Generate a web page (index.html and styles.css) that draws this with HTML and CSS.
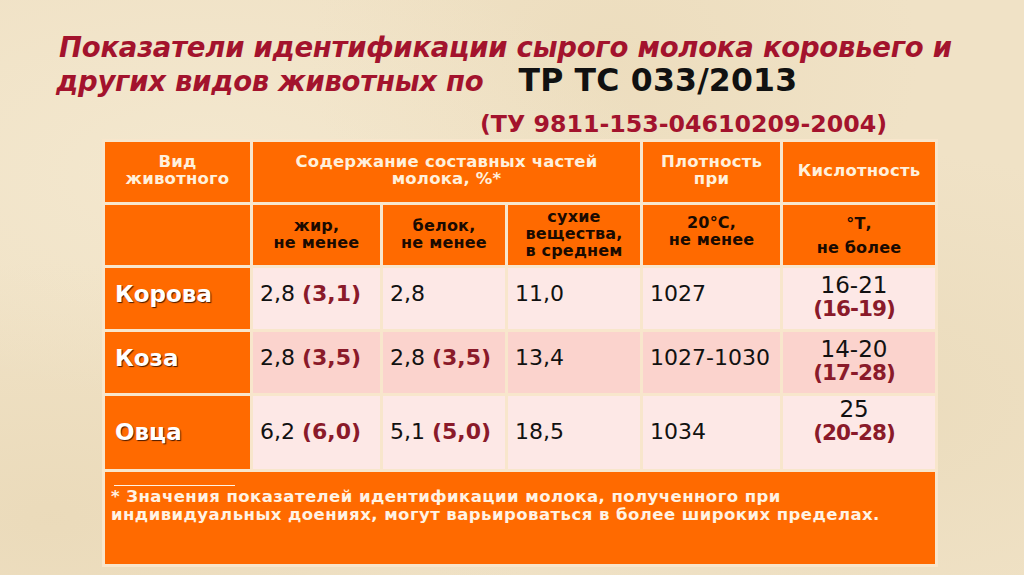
FILE: index.html
```html
<!DOCTYPE html>
<html lang="ru">
<head>
<meta charset="utf-8">
<link rel="stylesheet" href="styles.css">
</head>
<body>
<div class="slide">
  <h1 class="title">
    <span class="l1">Показатели идентификации сырого молока коровьего и</span>
    <span class="l2"><span class="it">других видов животных по</span><span class="tr">ТР ТС 033/2013</span></span>
    <span class="l3">(ТУ 9811-153-04610209-2004)</span>
  </h1>
  <table class="tbl">
    <colgroup>
      <col class="w1"><col class="w2"><col class="w3"><col class="w4"><col class="w5"><col class="w6">
    </colgroup>
    <tr class="h1">
      <th>Вид<br>животного</th>
      <th colspan="3">Содержание составных частей<br>молока, %*</th>
      <th>Плотность<br>при</th>
      <th class="mid">Кислотность</th>
    </tr>
    <tr class="h2">
      <th></th>
      <th class="two">жир,<br>не менее</th>
      <th class="two">белок,<br>не менее</th>
      <th class="three">сухие<br>вещества,<br>в среднем</th>
      <th class="up">20°С,<br>не менее</th>
      <th class="lowT">°Т,<br>не более</th>
    </tr>
    <tr class="r light">
      <th class="name">Корова</th>
      <td>2,8 <b>(3,1)</b></td>
      <td>2,8</td>
      <td>11,0</td>
      <td>1027</td>
      <td class="ac">16-21<br><b>(16-19)</b></td>
    </tr>
    <tr class="r dark">
      <th class="name">Коза</th>
      <td>2,8 <b>(3,5)</b></td>
      <td>2,8 <b>(3,5)</b></td>
      <td>13,4</td>
      <td>1027-1030</td>
      <td class="ac">14-20<br><b>(17-28)</b></td>
    </tr>
    <tr class="r light tall">
      <th class="name">Овца</th>
      <td>6,2 <b>(6,0)</b></td>
      <td>5,1 <b>(5,0)</b></td>
      <td>18,5</td>
      <td>1034</td>
      <td class="ac">25<br><b>(20-28)</b></td>
    </tr>
    <tr class="foot">
      <td colspan="6"><div class="rule"></div>* Значения показателей идентификации молока, полученного при<br>индивидуальных доениях, могут варьироваться в более широких пределах.</td>
    </tr>
  </table>
</div>
</body>
</html>
```
FILE: styles.css
```css
html, body {
  margin: 0;
  padding: 0;
}
body {
  width: 1024px;
  height: 575px;
  overflow: hidden;
  background-color: #f0e2c6;
  background-image:
    radial-gradient(ellipse at 20% 30%, rgba(250,242,222,0.35), rgba(250,242,222,0) 40%),
    radial-gradient(ellipse at 80% 70%, rgba(222,204,165,0.3), rgba(222,204,165,0) 45%),
    radial-gradient(ellipse at 60% 10%, rgba(230,212,175,0.35), rgba(230,212,175,0) 35%),
    radial-gradient(ellipse at 5% 90%, rgba(225,205,165,0.35), rgba(225,205,165,0) 35%);
  font-family: "DejaVu Sans", Verdana, sans-serif;
}
.slide {
  padding-top: 31px;
  box-sizing: border-box;
  height: 575px;
}
.title {
  margin: 0;
  font-weight: bold;
  font-size: 27.5px;
  line-height: 33px;
  display: flex;
  flex-direction: column;
}
.l1, .it {
  color: #a3132d;
  font-style: italic;
  letter-spacing: -0.25px;
}
.l1 {
  padding-left: 59px;
}
.l2 {
  padding-left: 56px;
  display: flex;
  align-items: baseline;
  height: 33px;
}
.tr {
  color: #111;
  font-style: normal;
  font-size: 31.5px;
  margin-left: 35px;
  letter-spacing: 0.2px;
}
.l3 {
  color: #a3132d;
  font-size: 23.7px;
  padding-left: 480px;
  line-height: 30px;
  margin-top: 12px;
}
.tbl {
  margin: 0 0 0 102px;
  width: 836px;
  border-collapse: separate;
  border-spacing: 3px;
  background: #f8e6cc;
  table-layout: fixed;
}
.w1 { width: 145px; }
.w2 { width: 127px; }
.w3 { width: 122px; }
.w4 { width: 132px; }
.w5 { width: 137px; }
.w6 { width: 152px; }
.tbl th, .tbl td {
  padding: 0;
  box-sizing: border-box;
}
.h1 th, .h2 th {
  background: #ff6a00;
  font-size: 16.5px;
  letter-spacing: 0.2px;
  line-height: 17px;
  font-weight: bold;
  text-align: center;
}
.h1 th {
  color: #fff0dc;
  height: 60px;
  vertical-align: top;
  padding-top: 11px;
}
.h1 th.mid {
  padding-top: 20px;
}
.h2 th {
  color: #1a0a00;
  height: 60px;
  vertical-align: top;
  padding-top: 9px;
  font-size: 16px;
}
.h2 th.two {
  padding-top: 12px;
}
.h2 th.three {
  padding-top: 3px;
  line-height: 17px;
}
.h2 th.lowT {
  padding-top: 7px;
  line-height: 24px;
}
.name {
  background: #ff6a00;
  color: #fff;
  font-size: 23px;
  font-weight: bold;
  text-align: left;
  padding-left: 10px !important;
  text-shadow: 1px 1px 1px #4a1a00;
  vertical-align: middle;
  padding-bottom: 9px !important;
}
.r td {
  font-size: 22px;
  color: #111;
  vertical-align: middle;
  padding-left: 7px;
  padding-bottom: 9px;
  line-height: 24px;
}
.r td b {
  color: #8a1a2a;
}
.r { height: 61px; }
.r.tall { height: 73px; }
.r.tall td, .r.tall .name { padding-bottom: 2px !important; }
.light td { background: #fde8e6; }
.dark td { background: #fbd3cd; }
.r td.ac {
  font-size: 23px;
  text-align: center;
  padding-left: 0;
  padding-right: 10px;
  padding-bottom: 4px;
  line-height: 23px;
}
.r td.ac b {
  font-size: 21.5px;
  letter-spacing: -1px;
}
.r.tall td.ac {
  vertical-align: top;
  padding-top: 2px;
}
.foot td {
  background: #ff6a00;
  height: 92px;
  vertical-align: top;
  color: #fff3e4;
  font-size: 16.5px;
  letter-spacing: 0.45px;
  font-weight: bold;
  line-height: 18px;
  padding: 13px 0 0 6px;
}
.rule {
  width: 121px;
  height: 1px;
  background: #fff3e4;
  margin: 0 0 2px 3px;
}
```
